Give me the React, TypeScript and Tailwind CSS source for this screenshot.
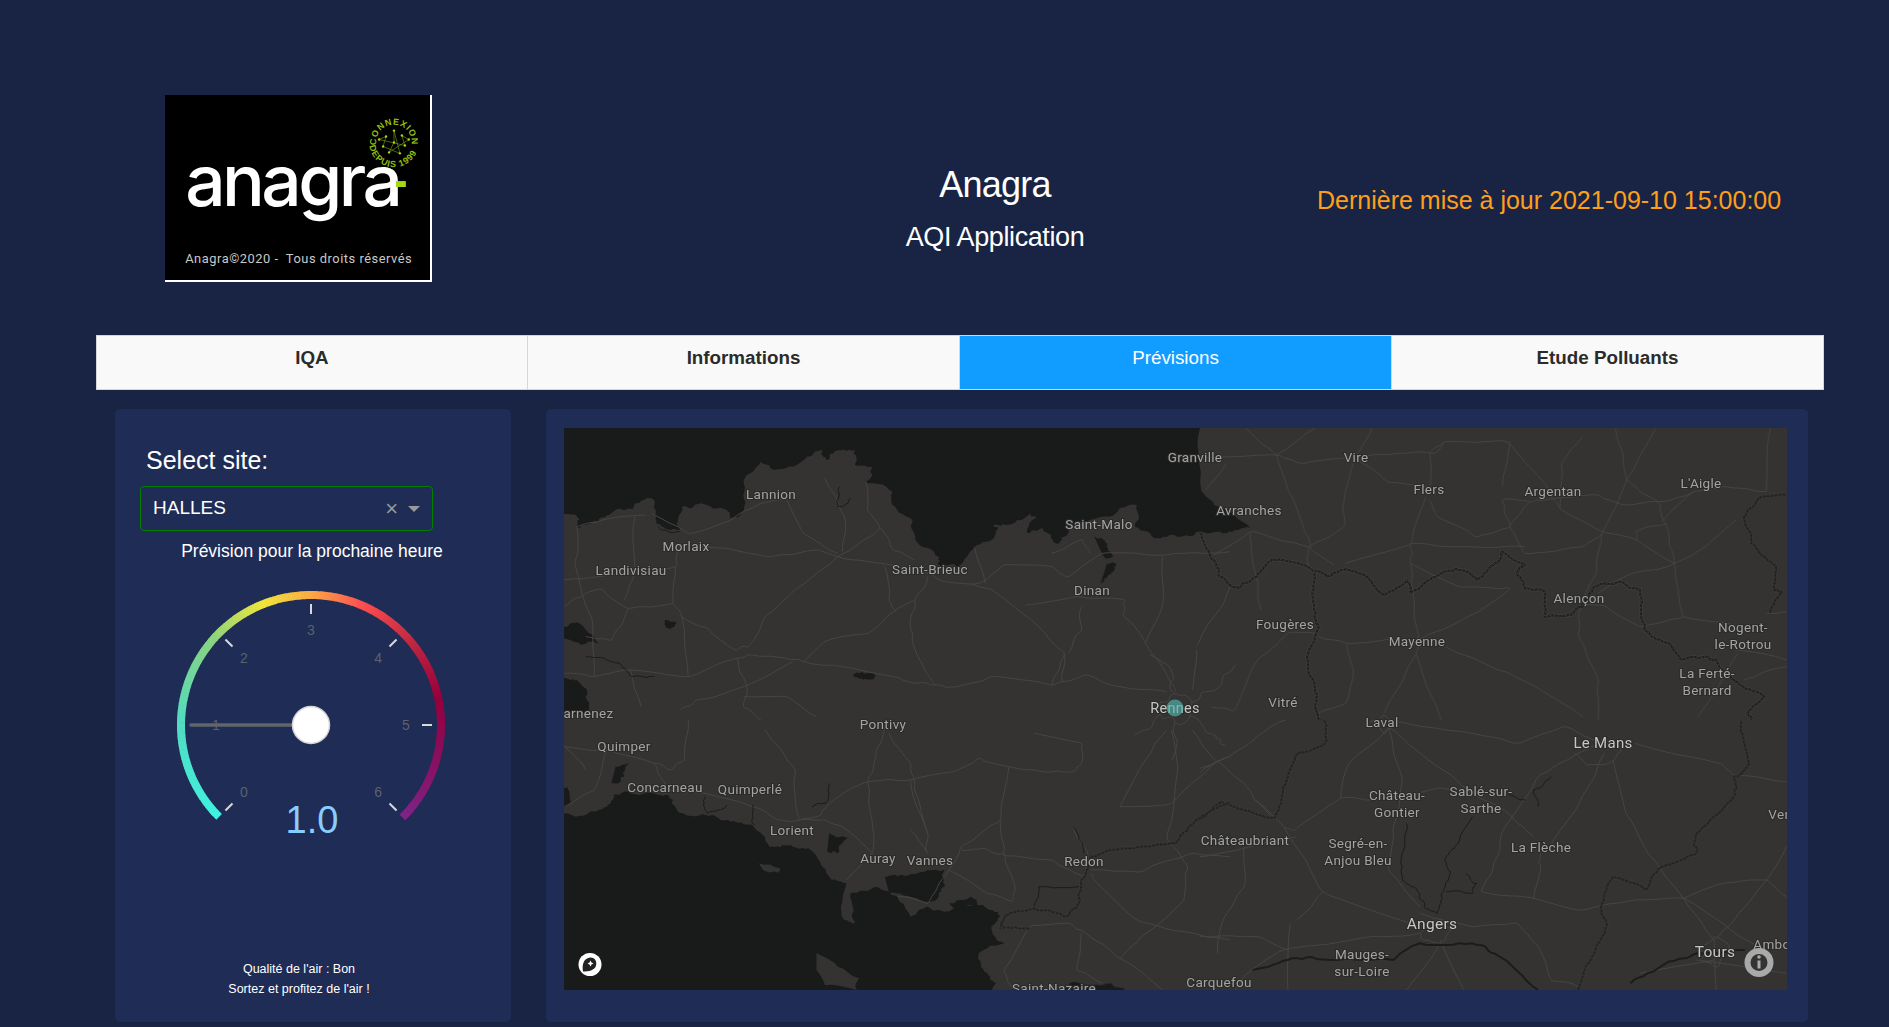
import React from "react";

// quadrant transforms: paths below were traced in crop coordinates
const Q1 = "translate(560 420) scale(0.4274 0.3333)";
const Q2 = "translate(1200 420) scale(0.3827 0.3333)";
const Q3 = "translate(560 720) scale(0.4274 0.3333)";
const Q4 = "translate(1200 720) scale(0.4394 0.3333)";

const ROADS: [string, string[]][] = [
  [Q1, [
    "10,480 90,470 270,440 280,380 390,385 490,410 600,390 650,410 750,430 860,460 900,485 980,490 1040,435 1150,440 1190,470 1270,400 1415,405 1510,400 1568,395",
    "650,410 550,510 480,590 440,680 410,690 345,625 285,590 265,550 270,440",
    "650,410 700,370 750,325 780,390 830,420",
    "750,325 720,270 715,185",
    "650,400 570,340 530,240 470,250 400,300 300,340 215,280",
    "660,395 665,290 620,175",
    "860,470 830,540 780,575 720,640 620,665 570,725 530,715 450,705 415,715 300,770 165,750 75,770 10,760",
    "830,540 820,600 830,685 870,780 880,795 930,800 1010,770 1150,795 1230,765 1310,800 1420,815",
    "1150,795 1180,700 1120,620 1010,510 960,490",
    "1180,700 1175,785",
    "570,725 660,740 780,770 830,790 880,795",
    "430,800 545,725",
    "430,800 320,840 280,870",
    "430,830 530,830 600,890",
    "1220,560 1220,630 1190,700",
    "1090,555 1210,530 1320,540 1320,590 1370,670 1430,790 1440,815",
    "1370,670 1410,550 1410,410",
    "1490,680 1530,590 1568,500",
    "1490,690 1480,810",
    "265,550 160,565 100,510 60,520 10,560",
    "160,565 120,660 60,650",
    "285,590 300,770",
    "175,290 175,450 150,540",
    "415,715 435,790 430,860 470,900",
    "40,320 100,300 200,285",
    "40,320 35,430 75,600 80,770",
    "760,440 770,540 785,575",
    "970,380 995,490",
    "1240,400 1220,360 1150,400",
    "1510,210 1560,130",
    "165,750 190,860",
  ]],
  [Q2, [
    "0,115 200,105 270,130 370,115 420,110 520,100 610,100 640,65 800,65 900,190 940,265 1040,330 1140,360 1240,430",
    "200,105 230,210 270,320 285,380 135,335 35,405",
    "285,380 375,320 375,250 405,115 450,25",
    "285,380 350,435",
    "285,380 285,450",
    "405,115 490,185 600,200 600,100",
    "600,240 620,290 720,350 810,320 790,240 860,245 810,320 850,400 1000,380 1050,340 1115,180 1190,25",
    "1050,340 1035,460 990,580 990,650 1040,780 1040,900",
    "550,370 550,430 560,550 570,660 565,700 630,900",
    "590,230 550,370 380,430",
    "550,370 700,380 850,380",
    "565,700 480,880",
    "640,680 780,750 860,790 1000,890",
    "310,650 385,670 500,655",
    "385,670 400,750 380,850 310,880",
    "300,640 230,640 150,720 90,870 30,860",
    "1115,180 1200,250 1220,320 1240,430 1260,590 1150,620",
    "1240,430 1130,460 1040,520",
    "1140,360 1140,335 1220,310",
    "1480,215 1370,200 1290,215 1200,245 1110,255 1040,225 900,240 860,245",
    "1480,215 1490,25",
    "1290,215 1210,300",
    "1400,300 1320,380 1240,430",
    "1260,590 1340,605 1430,630",
    "1150,620 1060,560 990,550",
    "1115,180 1085,25",
    "810,65 790,200",
    "940,265 945,130 1000,50",
    "1533,575 1480,580",
    "1405,700 1300,890",
    "1533,720 1400,690",
    "1420,780 1533,740",
    "200,105 120,25",
    "200,105 300,25",
    "640,65 600,100",
    "130,340 150,480 160,570",
    "550,430 680,500 810,505 700,590 570,660",
  ]],
  [Q3, [
    "10,80 110,90 220,130 260,150 290,120 300,0",
    "110,90 80,210 10,260",
    "220,130 235,170 250,210 340,220 450,260 510,300 560,300 620,300 680,340 730,400",
    "560,300 550,150 480,30",
    "560,300 610,285 640,240 720,185 820,180 920,155 980,115 1050,140 1130,155 1200,155",
    "720,185 735,130 755,50 770,0",
    "720,185 730,300 730,400 670,480",
    "820,180 860,340 860,400 820,330",
    "770,40 820,130 830,210 860,340",
    "1050,140 1030,300 940,380 900,470 860,550 790,530",
    "1030,300 1040,405 1150,420 1230,470",
    "940,390 990,385 1040,405 1060,480 1060,540",
    "910,450 1000,520 1060,545",
    "1230,470 1235,400 1200,320",
    "1240,460 1250,480 1350,600 1460,635 1568,660",
    "1240,450 1360,455 1480,400 1568,410",
    "1460,540 1360,650 1310,715 1230,640 1190,610 1100,620 1040,750 1060,810",
    "1310,715 1410,810",
    "1220,640 1210,750 1270,790",
    "1460,540 1468,440 1420,350 1445,150 1430,30",
    "1310,260 1430,250 1535,125 1568,110",
    "1310,260 1370,120 1420,30",
    "1110,40 1220,70 1220,130 1200,155",
    "1535,125 1480,30",
    "10,80 60,150",
  ]],
  [Q4, [
    "0,145 40,125 100,190 125,240 190,320 280,515 480,610",
    "40,125 0,160",
    "40,125 130,50 195,0",
    "125,240 170,300",
    "320,235 385,240 540,205 620,220 710,290 760,350",
    "320,235 215,330 190,320",
    "320,235 340,130 430,25 520,120 620,220",
    "430,25 460,180 440,320 430,450 500,560",
    "0,410 100,385 220,350",
    "100,380 100,500 50,610 40,700",
    "280,515 220,600",
    "500,580 620,620 720,610 770,680 800,780 860,800",
    "640,515 760,535 870,570 990,540 1100,535 1190,610 1270,680",
    "760,535 775,450 775,400",
    "640,515 680,400 690,330 770,170 860,100 920,70",
    "920,100 870,230 800,370",
    "920,70 830,20 720,70 560,30 450,5",
    "990,70 1180,130 1215,165 1335,185",
    "940,120 970,280 1020,400 1100,535",
    "1100,535 1170,660",
    "1290,480 1210,610 1170,660",
    "1290,480 1190,490 1100,535",
    "1290,480 1335,530",
    "1335,380 1290,480",
    "500,640 390,650 190,690 100,770 80,810",
    "550,670 600,810",
    "550,660 470,810",
    "200,810 205,610",
    "1170,660 1175,810",
    "1130,720 1335,760",
    "1000,760 1170,720",
    "0,650 130,650 200,690",
    // rings round Angers, Tours, Le Mans
    "500,640 530,600 570,630 550,670 510,660 500,640",
    "1140,680 1170,650 1205,680 1180,740 1140,720 1140,680",
    "850,100 880,135 930,130 960,90 920,60",
  ]],
  // Rennes and Laval, in page coordinates
  ["", [
    "1160,702 1175,694 1192,702 1190,716 1175,722 1160,714 1160,702",
    "1175,694 1172,672 1150,655",
    "1192,702 1215,690 1235,665",
    "1190,716 1215,735 1225,745",
    "1175,722 1172,760",
    "1160,714 1135,735",
    "1370,722 1382,716 1394,724 1384,734 1370,722",
  ]],
];

const BORDERS: [string, string][] = [
  [Q2, "0,335 25,400 50,470 100,505 135,480 180,425 215,420 300,455 330,470 370,450 430,465 480,525 540,480 550,520 630,460 680,450 725,480 770,430 790,395 850,435 830,455 850,505 900,515 900,590 970,585 1000,560 1030,500 1100,485 1150,510 1160,610 1180,650 1225,670 1260,720 1320,710 1350,720 1395,780 1475,830 1430,880 1440,900"],
  [Q2, "300,455 295,530 310,620 280,710 300,800 300,860 315,900"],
  [Q2, "1533,225 1460,235 1420,290 1440,370 1505,440 1500,510 1520,520 1490,580"],
  [Q4, "280,0 285,70 220,100 190,200 170,295 100,270 50,245 0,300"],
  [Q3, "1568,245 1470,320 1440,370 1290,390 1240,410 1220,480 1215,550 1180,590 1110,565 1040,590 1030,625 1100,625"],
  [Q4, "1230,0 1250,130 1215,170 1215,230 1130,340 1130,400 1050,440 1015,510 940,470 915,550 925,610 900,690 860,810"],
];

const RIVERS: [string, string, number][] = [
  [Q4, "120,750 210,715 300,720 440,720 500,670 620,670 670,700 770,810", 2],
  [Q4, "980,790 1060,730 1130,700 1240,690", 2],
  [Q4, "470,310 460,400 460,480 500,520 510,560 540,580", 1],
  [Q4, "620,290 580,380 560,410 570,460 550,520 540,580", 1],
  [Q4, "800,170 760,210 770,260", 1],
  [Q4, "700,220 740,240", 1],
  [Q4, "560,515 620,520 630,490 605,460", 1],
  [Q3, "1110,560 1120,500 1215,500", 1],
  [Q3, "630,190 620,250 590,260", 1],
  [Q3, "1200,320 1225,400", 1],
  [Q3, "340,230 345,280 390,255", 1],
  [Q3, "450,255 455,315", 1],
  [Q1, "655,200 650,260 680,235", 1],
  [Q1, "230,320 280,335", 1],
  [Q1, "60,710 140,730 170,770 220,770", 1],
];

const WATER: [string, string][] = [
  // north coast
  [Q1, "0,290 40,290 45,325 90,305 130,270 175,265 180,250 215,235 225,290 240,320 280,330 285,260 330,250 390,270 400,295 430,270 430,180 470,125 500,150 570,120 610,90 625,120 640,100 690,90 690,135 730,140 715,185 770,210 775,245 825,300 835,365 885,410 890,440 930,440 975,375 1020,340 1015,315 1060,310 1100,280 1115,295 1095,340 1130,325 1160,370 1180,350 1190,320 1240,300 1300,280 1350,255 1345,320 1400,355 1450,350 1490,335 1560,340 1615,324 1530,255 1500,210 1500,0 0,0"],
  // south coast
  [Q3, "0,280 60,285 110,260 125,225 160,215 230,225 265,240 285,280 340,285 400,305 450,315 490,380 540,375 580,385 630,470 670,490 665,600 690,605 680,520 740,500 790,530 820,590 860,560 900,575 990,555 1030,590 1010,630 1040,670 980,700 1000,760 1020,790 985,830 0,830"],
  [Q3, "1160,830 1200,785 1290,790 1340,830"],
  [Q3, "760,470 800,465 860,450 900,450 900,500 880,540 820,530 770,520"],
  [Q3, "630,340 680,355 650,400 625,395"],
  [Q3, "910,550 960,530 975,560 925,570"],
  [Q3, "130,140 160,130 150,170 120,190"],
  [Q3, "0,190 18,200 18,255 0,255"],
  [Q1, "0,770 40,780 60,830 60,880 0,880"],
  [Q1, "0,620 45,610 90,670 50,675 0,650"],
  [Q1, "1250,350 1280,370 1295,410 1270,405"],
  [Q1, "1280,430 1300,430 1280,470 1265,490"],
  [Q1, "245,600 270,605 265,622 245,615"],
  [Q1, "685,765 730,760 730,778 690,772"],
];

const ISLANDS: [string, string][] = [
  [Q3, "600,700 650,740 700,775 695,810 620,795 600,750"],
  [Q3, "465,430 515,445 510,458 475,450"],
];

const PLACES: [string, number, number, number?][] = [
  ["Granville", 1195, 458], ["Lannion", 771, 495], ["Morlaix", 686, 547], ["Landivisiau", 631, 571],
  ["Saint-Brieuc", 930, 570], ["Saint-Malo", 1099, 525], ["Dinan", 1092, 591], ["Rennes", 1175, 708, 14.5],
  ["Pontivy", 883, 725], ["Vire", 1356, 458], ["Flers", 1429, 490], ["Argentan", 1553, 492],
  ["L'Aigle", 1701, 484], ["Avranches", 1249, 511], ["Alençon", 1579, 599], ["Fougères", 1285, 625],
  ["Mayenne", 1417, 642], ["Nogent-", 1743, 628], ["le-Rotrou", 1743, 645], ["La Ferté-", 1707, 674],
  ["Bernard", 1707, 691], ["Vitré", 1283, 703], ["Laval", 1382, 723], ["Quimper", 624, 747],
  ["Concarneau", 665, 788], ["Quimperlé", 750, 790], ["Lorient", 792, 831], ["Auray", 878, 859],
  ["Vannes", 930, 861], ["Redon", 1084, 862], ["Saint-Nazaire", 1054, 989], ["Carquefou", 1219, 983],
  ["Le Mans", 1603, 743, 15], ["Châteaubriant", 1245, 841], ["Château-", 1397, 796], ["Gontier", 1397, 813],
  ["Sablé-sur-", 1481, 792], ["Sarthe", 1481, 809], ["Segré-en-", 1358, 844], ["Anjou Bleu", 1358, 861],
  ["La Flèche", 1541, 848], ["Angers", 1432, 924, 15.5], ["Mauges-", 1362, 955], ["sur-Loire", 1362, 972],
  ["Tours", 1715, 952, 15.5], ["Amboise", 1781, 945], ["Vendôme", 1798, 815], ["Douarnenez", 576, 714],
];

// same wobble on every render
let seed = 1;
function rnd() {
  seed += 1;
  const v = Math.sin(seed * 12.9898) * 43758.5453;
  return v - Math.floor(v) - 0.5;
}

function parse(pts: string) {
  return pts.split(" ").map((p) => p.split(",").map(Number));
}

// break each segment up and push the new points sideways
function roughen(line: number[][], amp: number, depth: number) {
  let out = line;
  let a = amp;
  for (let d = 0; d < depth; d++) {
    const next: number[][] = [out[0]];
    for (let i = 1; i < out.length; i++) {
      const [x0, y0] = out[i - 1];
      const [x1, y1] = out[i];
      const len = Math.hypot(x1 - x0, y1 - y0) || 1;
      const n = rnd() * a * 2;
      next.push([(x0 + x1) / 2 - ((y1 - y0) / len) * n, (y0 + y1) / 2 + ((x1 - x0) / len) * n]);
      next.push(out[i]);
    }
    out = next;
    a *= 0.6;
  }
  return out;
}

const toPoly = (line: number[][]) => line.map(([x, y]) => `${x.toFixed(1)},${y.toFixed(1)}`).join(" ");

// Catmull-Rom through the points, for the roads
function smooth(line: number[][]) {
  let d = `M${line[0][0]} ${line[0][1]}`;
  for (let i = 0; i < line.length - 1; i++) {
    const p0 = line[i - 1] ?? line[i];
    const p1 = line[i];
    const p2 = line[i + 1];
    const p3 = line[i + 2] ?? p2;
    const c1x = p1[0] + (p2[0] - p0[0]) / 6;
    const c1y = p1[1] + (p2[1] - p0[1]) / 6;
    const c2x = p2[0] - (p3[0] - p1[0]) / 6;
    const c2y = p2[1] - (p3[1] - p1[1]) / 6;
    d += ` C${c1x.toFixed(1)} ${c1y.toFixed(1)} ${c2x.toFixed(1)} ${c2y.toFixed(1)} ${p2[0].toFixed(1)} ${p2[1].toFixed(1)}`;
  }
  return d;
}

const waterShapes = WATER.map(([tr, pts]) => [tr, toPoly(roughen(parse(pts), 9, 3))]);
const islandShapes = ISLANDS.map(([tr, pts]) => [tr, toPoly(roughen(parse(pts), 6, 2))]);
const roadPaths = ROADS.map(([tr, lines]) => [tr, lines.map((l) => smooth(roughen(parse(l), 5, 2)))] as [string, string[]]);
const riverPaths = RIVERS.map(([tr, pts, w]) => [tr, toPoly(roughen(parse(pts), 7, 3)), w] as [string, string, number]);
const borderPaths = BORDERS.map(([tr, pts]) => [tr, toPoly(roughen(parse(pts), 7, 4))]);

function MapView() {
  return (
    <svg viewBox="564 428 1223 562" className="block w-[1223px] h-[562px] bg-[#343332] font-['Roboto',sans-serif]">
      <g className="blur-[0.4px]">
        {waterShapes.map(([tr, pts], i) => (
          <polygon key={i} transform={tr} points={pts} fill="#191a1a" />
        ))}
        {islandShapes.map(([tr, pts], i) => (
          <polygon key={i} transform={tr} points={pts} fill="#343332" />
        ))}

        {roadPaths.map(([tr, lines], i) => (
          <g key={i} transform={tr} fill="none" stroke="#474644" strokeWidth={1}>
            {lines.map((d, j) => (
              <path key={j} d={d} vectorEffect="non-scaling-stroke" />
            ))}
          </g>
        ))}

        {riverPaths.map(([tr, pts, w], i) => (
          <polyline key={i} transform={tr} points={pts} fill="none" stroke="#1b1c1b" strokeWidth={w} strokeLinejoin="round" vectorEffect="non-scaling-stroke" />
        ))}

        {/* department borders */}
        {borderPaths.map(([tr, pts], i) => (
          <g key={i} transform={tr} fill="none" strokeLinejoin="round">
            <polyline points={pts} stroke="#4b4a48" strokeOpacity={0.35} strokeWidth={4} vectorEffect="non-scaling-stroke" />
            <polyline points={pts} stroke="#1f1f1f" strokeWidth={2} vectorEffect="non-scaling-stroke" />
            <polyline points={pts} stroke="#5f5e5b" strokeOpacity={0.7} strokeWidth={0.8} strokeDasharray="1.5 2.5" vectorEffect="non-scaling-stroke" />
          </g>
        ))}
      </g>

      {PLACES.map(([name, x, y, size]) => (
        <text
          key={name}
          x={x}
          y={y + (size ? 4.5 : 4)}
          textAnchor="middle"
          fontSize={size ?? 13.5}
          fill={size ? "#c6c6c4" : "#a3a3a1"}
          stroke="#2a2a29"
          strokeWidth={2}
          className="[paint-order:stroke] tracking-[0.3px]"
        >
          {name}
        </text>
      ))}

      <circle cx={1175} cy={708} r={8.5} fill="#54b8b0" fillOpacity={0.65} />

      {/* mapbox logo */}
      <circle cx={590} cy={964.5} r={11.5} fill="#fff" />
      <path d="M583 971.5 C582 965.5 583 958.5 590 957.5 C596 957.5 597 962.5 596 965.5 C595 970.5 588 971.5 583 971.5 Z" fill="#222" />
      <path d="M590.5 960.5 l1 2 2 1 -2 1 -1 2 -1 -2 -2 -1 2 -1 z" fill="#fff" />

      {/* info button */}
      <circle cx={1759} cy={962.5} r={11.5} fill="#333" stroke="#a9a9a9" strokeWidth={6} />
      <circle cx={1759} cy={957} r={1.8} fill="#a9a9a9" />
      <rect x={1757.5} y={960.5} width={3} height={8} fill="#a9a9a9" />
    </svg>
  );
}

const STOPS: [number, string][] = [
  [-135, "#3ff2e2"], [-90, "#52dcc2"], [-50, "#88d480"], [-22, "#f0e63c"], [0, "#fba845"],
  [22, "#fe5050"], [50, "#c02840"], [78, "#95003c"], [100, "#8a0d5a"], [135, "#7f2487"],
];

function colorAt(a: number) {
  let i = 0;
  while (i < STOPS.length - 2 && a > STOPS[i + 1][0]) i++;
  const [a0, c0] = STOPS[i];
  const [a1, c1] = STOPS[i + 1];
  const t = (a - a0) / (a1 - a0);
  const ch = (c: string, p: number) => parseInt(c.slice(p, p + 2), 16);
  const mix = (p: number) => Math.round(ch(c0, p) + (ch(c1, p) - ch(c0, p)) * t);
  return `rgb(${mix(1)},${mix(3)},${mix(5)})`;
}

// angle in degrees from twelve o'clock, centre of the dial is 151,151
function polar(a: number, r: number) {
  const rad = (a * Math.PI) / 180;
  return [151 + r * Math.sin(rad), 151 - r * Math.cos(rad)];
}

function Gauge() {
  const segments = [];
  for (let a = -135; a < 135; a++) {
    const [x0, y0] = polar(a, 130);
    const [x1, y1] = polar(a + 1.3, 130);
    segments.push(
      <path key={a} d={`M${x0} ${y0} A130 130 0 0 1 ${x1} ${y1}`} fill="none" stroke={colorAt(a)} strokeWidth={8} />
    );
  }
  return (
    <svg viewBox="0 0 302 280" className="block w-[302px] h-[280px] ml-[45px] mt-[11px]">
      {segments}
      {[0, 1, 2, 3, 4, 5, 6].map((n) => {
        const a = -135 + n * 45;
        const [x0, y0] = polar(a, 111);
        const [x1, y1] = polar(a, 121);
        const [tx, ty] = polar(a, 95);
        return (
          <g key={n}>
            <line x1={x0} y1={y0} x2={x1} y2={y1} stroke="#d9d9d9" strokeWidth={2} />
            <text x={tx} y={ty + 5} textAnchor="middle" fontSize={14} fill="#5c616c">
              {n}
            </text>
          </g>
        );
      })}
      <line x1={31} y1={151} x2={151} y2={151} stroke="#62666a" strokeWidth={3.5} strokeLinecap="round" />
      <circle cx={151} cy={151} r={18.5} fill="#fff" stroke="#d4d4d4" strokeWidth={1.5} />
      <text x={152} y={259} textAnchor="middle" fontSize={38} fill="#8accff">
        1.0
      </text>
    </svg>
  );
}

function Logo() {
  const nodes = [[396, 131], [388, 137], [404, 136], [396, 143], [385, 147], [407, 146], [391, 153], [402, 154], [381, 140], [411, 140]];
  return (
    <svg viewBox="165 95 267 187" className="block w-[267px] h-[187px] bg-black border-r-2 border-b-2 border-white box-border">
      <text x={185} y={207} fontSize={72} fontWeight={500} fill="#fff" letterSpacing={-3.6} className="font-['Inter',sans-serif] blur-[0.4px]">
        anagra
      </text>
      <rect x={398} y={182} width={10} height={6} fill="#a3d915" />
      <defs>
        <path id="badge-top" d="M378 143 A18 18 0 0 1 414 143" />
        <path id="badge-bottom" d="M371 143 A25 25 0 0 0 421 143" />
      </defs>
      <text fontSize={9} fontWeight={700} fill="#8fbf10" letterSpacing={0.8}>
        <textPath href="#badge-top" startOffset="50%" textAnchor="middle">CONNEXION</textPath>
      </text>
      <text fontSize={9} fontWeight={700} fill="#8fbf10" letterSpacing={0.8}>
        <textPath href="#badge-bottom" startOffset="46%" textAnchor="middle">DEPUIS 1999</textPath>
      </text>
      <g stroke="#7fa80f" strokeWidth={0.6}>
        {nodes.map(([x, y], i) => {
          const [nx, ny] = nodes[(i + 3) % nodes.length];
          return <line key={i} x1={x} y1={y} x2={nx} y2={ny} />;
        })}
      </g>
      {nodes.map(([x, y], i) => (
        <circle key={i} cx={x} cy={y} r={1.2} fill="#a3d915" />
      ))}
      <text x={185} y={264.5} fontSize={13} fill="#c9c9c9" textLength={229} xmlSpace="preserve" className="font-['Roboto',sans-serif]">
        Anagra©2020 -  Tous droits réservés
      </text>
    </svg>
  );
}

const TABS = ["IQA", "Informations", "Prévisions", "Etude Polluants"];

export default function App() {
  return (
    <div className="h-[1027px] overflow-hidden bg-[#192444] font-['Liberation_Sans',Arial,sans-serif] text-white">
      {/* Header */}
      <div className="flex items-center pt-[95px] pl-[165px]">
        <Logo />
        <div className="ml-[263px] mt-[44px] w-[600px] text-center">
          <div className="text-[36px] leading-[44px] tracking-[-0.8px]">Anagra</div>
          <div className="mt-[8px] text-[27px] leading-[44px] tracking-[-0.4px]">AQI Application</div>
        </div>
        <div className="ml-[22px] mt-[24px] text-[25px] text-[#fe9f1b] whitespace-nowrap">
          Dernière mise à jour 2021-09-10 15:00:00
        </div>
      </div>

      {/* Tabs */}
      <div className="grid grid-cols-4 ml-[96px] w-[1728px] mt-[53px] h-[55px]">
        {TABS.map((tab) => (
          <div
            key={tab}
            className={
              tab === "Prévisions"
                ? "border border-[#d6d6d6] not-first:border-l-0 bg-[#119dff] text-white text-center text-[18.8px] pt-[8px]"
                : "border border-[#d6d6d6] not-first:border-l-0 bg-[#f9f9f9] text-[#2b2b2b] font-bold text-center text-[18.8px] pt-[8px]"
            }
          >
            {tab}
          </div>
        ))}
      </div>

      {/* Content */}
      <div className="flex ml-[115px] mt-[19px] gap-[35px]">
        <div className="w-[396px] h-[613px] rounded-[5px] bg-[#1f2c56] pt-[37px]">
          <div className="pl-[31px] text-[25px] leading-[28px]">Select site:</div>
          <div className="flex items-center ml-[25px] mt-[12px] w-[293px] h-[45px] px-[12px] rounded-[4px] border border-[#008000]">
            <span className="flex-1 text-[19px]">HALLES</span>
            <span className="text-[#999] text-[22px] leading-none mr-[10px]">×</span>
            <span className="w-0 h-0 border-x-[6.5px] border-x-transparent border-t-[6px] border-t-[#999]" />
          </div>
          <div className="mt-[8px] pr-[2px] text-center text-[17.5px] leading-[24px]">Prévision pour la prochaine heure</div>
          <Gauge />
          <div className="w-[368px] mt-[105px] text-center text-[12.5px] leading-[20px]">
            <div>Qualité de l'air : Bon</div>
            <div>Sortez et profitez de l'air !</div>
          </div>
        </div>

        <div className="w-[1262px] h-[613px] rounded-[5px] bg-[#1f2c56] pl-[18px] pt-[19px]">
          <MapView />
        </div>
      </div>
    </div>
  );
}
